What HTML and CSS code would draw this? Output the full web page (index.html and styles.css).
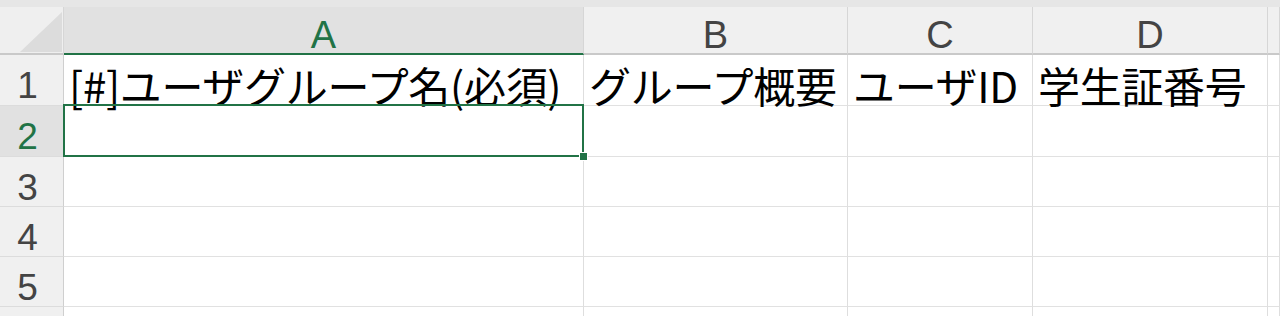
FILE: index.html
```html
<!DOCTYPE html>
<html lang="ja">
<head>
<meta charset="utf-8">
<title>Sheet</title>
<link rel="stylesheet" href="styles.css">
</head>
<body>
<div class="topband"></div>
<div class="sheet">
  <div class="corner"></div>
  <div class="colhead sel">A</div>
  <div class="colhead">B</div>
  <div class="colhead">C</div>
  <div class="colhead">D</div>
  <div class="colhead"></div>

  <div class="rowhead">1</div>
  <div class="cell">[#]ユーザグループ名(必須)</div>
  <div class="cell">グループ概要</div>
  <div class="cell">ユーザID</div>
  <div class="cell">学生証番号</div>
  <div class="cell"></div>

  <div class="rowhead sel">2</div>
  <div class="cell active"></div>
  <div class="cell"></div>
  <div class="cell"></div>
  <div class="cell"></div>
  <div class="cell"></div>

  <div class="rowhead">3</div>
  <div class="cell"></div>
  <div class="cell"></div>
  <div class="cell"></div>
  <div class="cell"></div>
  <div class="cell"></div>

  <div class="rowhead">4</div>
  <div class="cell"></div>
  <div class="cell"></div>
  <div class="cell"></div>
  <div class="cell"></div>
  <div class="cell"></div>

  <div class="rowhead">5</div>
  <div class="cell"></div>
  <div class="cell"></div>
  <div class="cell"></div>
  <div class="cell"></div>
  <div class="cell"></div>

  <div class="rowhead"></div>
  <div class="cell"></div>
  <div class="cell"></div>
  <div class="cell"></div>
  <div class="cell"></div>
  <div class="cell"></div>
</div>
</body>
</html>
```

FILE: styles.css
```css
html, body {
  margin: 0;
  padding: 0;
  background: #ffffff;
  overflow: hidden;
  width: 1280px;
  height: 316px;
}

.topband {
  height: 7px;
  background: #e6e6e6;
}

.sheet {
  display: grid;
  grid-template-columns: 64px 520px 264px 185px 235px 1fr;
  grid-template-rows: 48px 51px 51px 50px 50px 50px 50px;
}

.sheet > div {
  box-sizing: border-box;
}

.corner {
  position: relative;
  background: #efefef;
  border-right: 1px solid #d6d6d6;
  border-bottom: 2px solid #c9c9c9;
}

.corner::after {
  content: "";
  position: absolute;
  left: 20px;
  top: 5px;
  width: 42px;
  height: 40px;
  background: #dcdcdc;
  clip-path: polygon(100% 0, 100% 100%, 0 100%);
}

.colhead {
  background: #f0f0f0;
  border-right: 1px solid #d6d6d6;
  border-bottom: 2px solid #c9c9c9;
  font-family: "Liberation Sans", Arial, sans-serif;
  font-size: 38px;
  line-height: 38px;
  padding-top: 9px;
  text-align: center;
  color: #444444;
}

.colhead.sel {
  background: #e1e1e1;
  color: #217346;
  border-bottom-color: #217346;
}

.rowhead {
  background: #f0f0f0;
  border-right: 1px solid #cfcfcf;
  border-bottom: 1px solid #dcdcdc;
  font-family: "Liberation Sans", Arial, sans-serif;
  font-size: 37px;
  line-height: 37px;
  padding-top: 12px;
  padding-right: 8px;
  text-align: center;
  color: #444444;
}

.rowhead.sel {
  background: #e1e1e1;
  color: #217346;
}

.cell {
  border-right: 1px solid #dedede;
  border-bottom: 1px solid #e1e1e1;
  font-family: "Noto Sans CJK JP", "Noto Sans", sans-serif;
  font-size: 42px;
  line-height: 42px;
  padding: 9px 0 0 5px;
  color: #000000;
  white-space: nowrap;
  letter-spacing: -0.3px;
}

.cell.active {
  position: relative;
}

.cell.active::after {
  content: "";
  position: absolute;
  left: -1px;
  top: -2px;
  right: -1px;
  bottom: -1px;
  border: 2px solid #217346;
  z-index: 2;
}

.cell.active::before {
  content: "";
  position: absolute;
  right: -4px;
  bottom: -4px;
  width: 7px;
  height: 7px;
  background: #217346;
  box-shadow: 0 0 0 1px #ffffff;
  z-index: 3;
}
```
